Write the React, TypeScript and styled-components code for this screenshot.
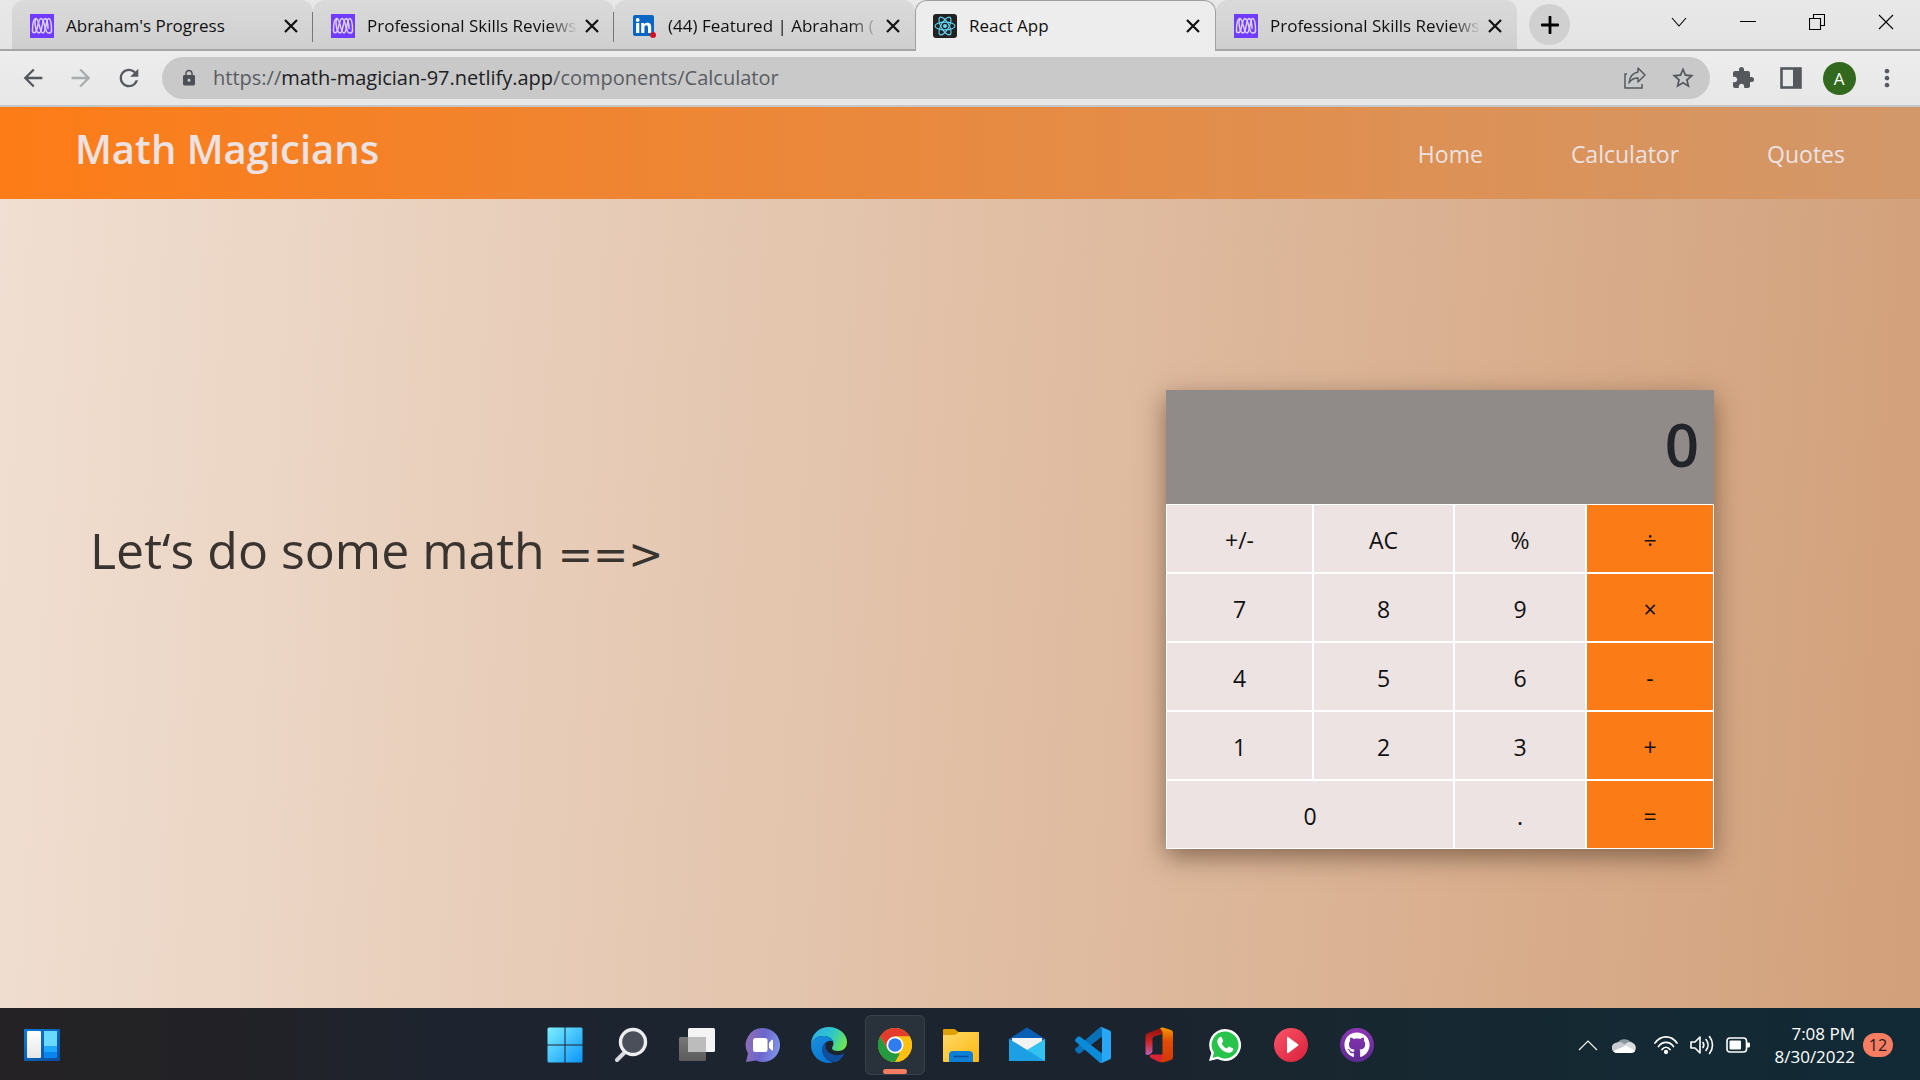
import React from "react";
import styled, { createGlobalStyle, css } from "styled-components";
import { FaGithub } from "react-icons/fa";
import {
  MdArrowBack,
  MdArrowForward,
  MdRefresh,
  MdLock,
  MdStarBorder,
  MdExtension,
  MdMoreVert,
} from "react-icons/md";

const uiFont = `"Open Sans", "Noto Sans", sans-serif`;

const GlobalStyle = createGlobalStyle`
  *, *::before, *::after { box-sizing: border-box; }
  body { margin: 0; font-family: ${uiFont}; }
  button, input { font: inherit; color: inherit; }
  svg { display: block; flex: none; }
`;

const Screen = styled.div`
  display: flex;
  flex-direction: column;
  min-height: 100vh;
`;

const bareButton = css`
  border: 0;
  padding: 0;
  background: none;
  display: flex;
  align-items: center;
  justify-content: center;
`;

/* ---------- browser window ---------- */

const TabStrip = styled.div`
  display: flex;
  height: 51px;
  padding-left: 12px;
  background: linear-gradient(#e8e8e8, #e4e4e4);
  border-bottom: 2px solid #a6a6a6;
`;

const Tab = styled.div<{ $active?: boolean; $divider?: boolean }>`
  position: relative;
  flex: 0 1 301px;
  min-width: 0;
  display: flex;
  align-items: center;
  height: 49px;
  padding: 2px 10px 0 18px;
  color: #111;
  border-radius: 12px 12px 0 0;
  background: linear-gradient(#dadada, #cfcfcf);
  ${(p) =>
    p.$divider &&
    css`
      &::after {
        content: "";
        position: absolute;
        right: 0;
        top: 12px;
        width: 1px;
        height: 30px;
        background: #777;
      }
    `}
  ${(p) =>
    p.$active &&
    css`
      height: 51px;
      padding: 0 10px 0 17px;
      border: 1px solid #a0a0a0;
      border-bottom: 0;
      background: #ededed;
    `}
`;

const TabTitle = styled.span<{ $fade?: boolean }>`
  flex: 1;
  min-width: 0;
  margin: 0 2px 0 12px;
  overflow: hidden;
  white-space: nowrap;
  font-size: 17px;
  line-height: 24px;
  ${(p) => p.$fade && css`mask-image: linear-gradient(90deg, #000 86%, transparent);`}
`;

const TabClose = styled.button`
  ${bareButton}
  width: 24px;
  height: 24px;
`;

const NewTab = styled.button`
  ${bareButton}
  width: 41px;
  height: 41px;
  margin: 4px 0 0 12px;
  border-radius: 50%;
  background: #d0d0d0;
`;

const WindowControls = styled.div`
  display: flex;
  margin-left: auto;
`;

const WindowButton = styled.button`
  ${bareButton}
  width: 69px;
  height: 43px;
`;

const Toolbar = styled.div`
  display: flex;
  align-items: center;
  height: 56px;
  padding: 0 9px;
  background: linear-gradient(#ededed, #e7e7e7);
  border-bottom: 2px solid #c4c6c8;
`;

const ToolButton = styled.button<{ $dim?: boolean }>`
  ${bareButton}
  width: 48px;
  height: 42px;
  color: ${(p) => (p.$dim ? "#a9abad" : "#55595e")};
`;

const AddressBar = styled.div`
  flex: 1;
  display: flex;
  align-items: center;
  height: 42px;
  margin: 0 9px;
  padding: 0 3px 0 18px;
  border-radius: 21px;
  background: #c9c9c9;
  color: #4d5156;
`;

const Url = styled.a`
  flex: 1;
  margin-left: 15px;
  font-size: 20px;
  line-height: 28px;
  color: #5a5d61;
  text-decoration: none;
  b {
    font-weight: 400;
    color: #202124;
  }
`;

const Avatar = styled.span`
  display: grid;
  place-items: center;
  width: 33px;
  height: 33px;
  border-radius: 50%;
  background: #33691e;
  color: #fff;
  font-size: 17px;
`;

/* ---------- web page ---------- */

const Page = styled.div`
  flex: 1;
  display: flex;
  flex-direction: column;
  background: linear-gradient(94deg, #f0dfd2, #d2a07a);
`;

const SiteHeader = styled.header`
  display: flex;
  justify-content: space-between;
  align-items: center;
  height: 92px;
  padding: 0 75px;
  color: #ede2e2;
  background: linear-gradient(90deg, #fd7c17, #d2986a);
`;

const SiteTitle = styled.h1`
  margin: 0 0 8px;
  font-size: 40px;
  line-height: 56px;
  font-weight: 600;
`;

const SiteNav = styled.nav`
  display: flex;
  gap: 88px;
  padding-top: 2px;
  a {
    color: inherit;
    font-size: 23px;
    line-height: 36px;
    text-decoration: none;
  }
`;

const Content = styled.main`
  flex: 1;
  display: flex;
  align-items: center;
  justify-content: space-between;
  padding: 32px 206px 0 90px;
`;

const Lead = styled.h2`
  margin: 0 0 134px;
  color: #3a3431;
  font-size: 50px;
  line-height: 72px;
  font-weight: 400;
`;

const Arrow = styled.span`
  font-family: "DejaVu Sans", sans-serif;
  font-size: 42px;
  font-weight: 400;
`;

const Calculator = styled.section`
  width: 548px;
  box-shadow: 0 8px 24px rgba(60, 40, 25, 0.55);
`;

const Display = styled.output`
  display: flex;
  justify-content: flex-end;
  align-items: center;
  height: 114px;
  padding: 0 15px 6px 0;
  background: #908a89;
  color: #212529;
  font-size: 60px;
  line-height: 80px;
  font-weight: 600;
`;

const Keys = styled.div`
  display: grid;
  grid-template-columns: 147fr 141fr 132fr 128fr;
  grid-auto-rows: 69px;
`;

const Key = styled.button<{ $operator?: boolean; $wide?: boolean }>`
  grid-column: span ${(p) => (p.$wide ? 2 : 1)};
  padding: 2px 0 0;
  border: 1px solid #fff;
  background: ${(p) => (p.$operator ? "#fb7b17" : "#ede3e2")};
  color: #111;
  font-size: 23px;
  line-height: 32px;
`;

/* ---------- taskbar ---------- */

const Taskbar = styled.footer`
  display: grid;
  grid-template-columns: 1fr auto 1fr;
  align-items: center;
  height: 72px;
  padding-top: 2px;
  background: linear-gradient(90deg, #242224 0%, #222226 12%, #1d2430 24%, #1b242e 60%, #162831 75%, #112a36 100%);
  color: #fff;
`;

const Widgets = styled.button`
  ${bareButton}
  width: 36px;
  margin-left: 24px;
`;

const Apps = styled.div`
  display: flex;
  gap: 6px;
  padding-left: 2px;
`;

const AppButton = styled.button<{ $open?: boolean }>`
  ${bareButton}
  position: relative;
  width: 60px;
  height: 60px;
  border-radius: 6px;
  ${(p) =>
    p.$open &&
    css`
      background: #29323a;
      box-shadow: inset 0 0 0 1px #38414a;
      &::after {
        content: "";
        position: absolute;
        left: 18px;
        bottom: 1px;
        width: 24px;
        height: 5px;
        border-radius: 3px;
        background: #f67d62;
      }
    `}
`;

const Tray = styled.div`
  display: flex;
  align-items: center;
  justify-content: flex-end;
  padding-right: 27px;
`;

const TrayIcons = styled.div`
  display: flex;
  align-items: center;
  gap: 12px;
  margin-right: 18px;
  & + & {
    margin-right: 24px;
  }
`;

const Clock = styled.time`
  font-size: 17px;
  line-height: 23px;
  text-align: right;
`;

const Badge = styled.span`
  display: grid;
  place-items: center;
  width: 30px;
  height: 24px;
  margin-left: 8px;
  border-radius: 12px;
  background: #f67d62;
  color: #1c1c1c;
  font-size: 16px;
  line-height: 24px;
`;

/* ---------- drawings ---------- */

const MicroverseIcon = () => (
  <svg width="24" height="24" viewBox="0 0 24 24" fill="none">
    <rect width="24" height="24" fill="#6f3bff" />
    <g stroke="#e0d2ff" strokeWidth="1.500" strokeLinecap="round">
      <path d="M2.500 16.500C2.500 9 3.500 4.500 6 4.500c3 0 3.500 14.500 7 14.500 3 0 3-14.500 5.500-14.500 2 0 3 4.500 3 12" />
      <path d="M2.500 16.500c0 3 3 3 4 0C8 12 8.500 4.500 11 4.500c3 0 3.500 9 5.500 13 1.200 2.500 5 2 5-1" />
      <path d="M6 4.500C4 7 5.500 19 9 19c3.500 0 3-14.500 6-14.500 2 0 3 6 3 10" />
    </g>
  </svg>
);

const LinkedInIcon = () => (
  <svg width="24" height="24" viewBox="0 0 24 24">
    <rect x="1" y="1" width="21" height="21" rx="2" fill="#0a66c2" />
    <g fill="#fff">
      <circle cx="5.700" cy="6" r="1.900" />
      <path d="M4.100 9h3.200v10H4.100zM9.200 9h3v1.400c.6-1 1.700-1.700 3.200-1.700 3 0 3.800 1.900 3.800 4.600V19H16v-5.200c0-1.400-.3-2.500-1.700-2.500s-1.900 1-1.900 2.500V19H9.200z" />
    </g>
    <circle cx="21" cy="21" r="3" fill="#d11124" />
  </svg>
);

const ReactIcon = () => (
  <svg width="24" height="24" viewBox="0 0 24 24" fill="none">
    <rect width="24" height="24" rx="3" fill="#222" />
    <circle cx="12" cy="12" r="2" fill="#61dafb" />
    <g stroke="#61dafb" strokeWidth="1.100">
      <ellipse cx="12" cy="12" rx="10" ry="3.900" />
      <ellipse cx="12" cy="12" rx="10" ry="3.900" transform="rotate(60 12 12)" />
      <ellipse cx="12" cy="12" rx="10" ry="3.900" transform="rotate(120 12 12)" />
    </g>
  </svg>
);

const CrossIcon = () => (
  <svg width="14" height="14" viewBox="0 0 14 14" stroke="#111" strokeWidth="2.200">
    <path d="M1 1l12 12M13 1L1 13" />
  </svg>
);

const PlusIcon = () => (
  <svg width="18" height="18" viewBox="0 0 18 18" stroke="#000" strokeWidth="2.800" strokeLinecap="round">
    <path d="M9 1v16M1 9h16" />
  </svg>
);

const ShareIcon = () => (
  <svg width="24" height="24" viewBox="0 0 24 24" fill="none" stroke="currentColor" strokeWidth="1.500">
    <path d="M4 8H2v14h17v-4" />
    <path d="M15 2l7 7-7 7v-4c-4 0-7 1.500-9 5 .5-6 4-10 9-11z" strokeLinejoin="round" />
  </svg>
);

const SidePanelIcon = () => (
  <svg width="22" height="22" viewBox="0 0 22 22" fill="none">
    <rect x="1.500" y="1.500" width="19" height="19" stroke="currentColor" strokeWidth="2.600" />
    <path d="M13 1h8v20h-8z" fill="currentColor" />
  </svg>
);

const WidgetsIcon = () => (
  <svg width="36" height="32" viewBox="0 0 36 32">
    <defs>
      <linearGradient id="widget-frame" x1="0" y1="0" x2="1" y2="1">
        <stop stopColor="#0a7bd8" />
        <stop offset="1" stopColor="#0d4a9a" />
      </linearGradient>
      <linearGradient id="widget-pane" x1="0" y1="0" x2="0" y2="1">
        <stop stopColor="#fff" />
        <stop offset="1" stopColor="#e6e6e6" />
      </linearGradient>
    </defs>
    <rect width="36" height="32" rx="1" fill="url(#widget-frame)" />
    <rect x="3" y="2" width="14" height="27" rx="1" fill="url(#widget-pane)" />
    <path d="M20 2h13v15H20z" fill="#69d8ff" />
    <path d="M20 17h13v6H20z" fill="#1ea7ff" />
    <path d="M20 23h13v6H20z" fill="#0a84ee" />
  </svg>
);

const StartIcon = () => (
  <svg width="36" height="36" viewBox="0 0 36 36">
    <defs>
      <linearGradient id="start" x1="0" y1="0" x2="36" y2="36" gradientUnits="userSpaceOnUse">
        <stop stopColor="#7df1ff" />
        <stop offset="1" stopColor="#0a93fb" />
      </linearGradient>
    </defs>
    <path fill="url(#start)" d="M2 .5h15.500v17H.5V2A1.500 1.500 0 0 1 2 .5zM18.500.5H34A1.500 1.500 0 0 1 35.500 2v15.500h-17zM.5 18.500h17v17H2A1.500 1.500 0 0 1 .5 34zM18.500 18.500h17V34a1.500 1.500 0 0 1-1.500 1.500H18.500z" />
  </svg>
);

const SearchIcon = () => (
  <svg width="36" height="36" viewBox="0 0 36 36">
    <path d="M4 33l8-8" stroke="#d6dadc" strokeWidth="4" strokeLinecap="round" />
    <circle cx="20" cy="15" r="12.500" fill="#4a4f59" stroke="#eceeef" strokeWidth="3.400" />
  </svg>
);

const TaskViewIcon = () => (
  <svg width="36" height="36" viewBox="0 0 36 36">
    <defs>
      <linearGradient id="view-back" x1="0" y1="0" x2="0" y2="1">
        <stop stopColor="#777" />
        <stop offset="1" stopColor="#5c5c5c" />
      </linearGradient>
    </defs>
    <rect x="0" y="10" width="27" height="24" rx="1.500" fill="url(#view-back)" />
    <rect x="9" y="1" width="27" height="24" rx="1.500" fill="#f4f4f4" />
    <path d="M9 10h18v15H10.500A1.500 1.500 0 0 1 9 23.500z" fill="#bcbcbc" />
  </svg>
);

const ChatIcon = () => (
  <svg width="36" height="36" viewBox="0 0 36 36">
    <defs>
      <linearGradient id="chat" x1="0" y1=".3" x2="1" y2=".5">
        <stop stopColor="#8f6fb4" />
        <stop offset=".5" stopColor="#6b66cc" />
        <stop offset="1" stopColor="#7f93ea" />
      </linearGradient>
    </defs>
    <path d="M18 1a17 17 0 1 1-7 32.500L1 35l2-8.500A17 17 0 0 1 18 1z" fill="url(#chat)" />
    <rect x="8" y="11" width="14.500" height="14" rx="2.500" fill="#fff" />
    <path d="M24 16l2.500-3c.8-.6 1.500-.2 1.500.6v9c0 .8-.7 1.200-1.500.6L24 20.500z" fill="#fff" />
  </svg>
);

const EdgeIcon = () => (
  <svg width="36" height="36" viewBox="0 0 36 36">
    <defs>
      <linearGradient id="edge-top" x1="0" y1=".3" x2="1" y2=".6">
        <stop stopColor="#2fb0e8" />
        <stop offset=".55" stopColor="#2fc7c6" />
        <stop offset="1" stopColor="#6fe64d" />
      </linearGradient>
      <linearGradient id="edge-left" x1="0" y1="0" x2=".6" y2="1">
        <stop stopColor="#1a8fdd" />
        <stop offset="1" stopColor="#0878d4" />
      </linearGradient>
    </defs>
    <path d="M0 18C0 7 8 0 18 0s18 7 18 15c0 6-4 9-9 9-4 0-6-1-6-3 0-1 1.500-2 1.500-4.500C22.500 12 18 9 12 9 6 9 1.500 12 0 18z" fill="url(#edge-top)" />
    <path d="M0 18C1.500 12 6 9 12 9c5 0 9 2 10.300 5.500C20 12.800 15 14 12.500 18 9 25 14 33 22 35.500c-1.200.3-2.600.5-4 .5C8 36 0 28 0 18z" fill="url(#edge-left)" />
    <path d="M14.500 15.500C10 19.500 10 27 15 31.500c5 4.300 11 4.500 13.500 1.500 2-1.500 3.500-3.500 4.500-5.500.3-.7-.3-1-.8-.7-2 1-4 1.400-6.200 1.400-6.500 0-11.500-4.500-11.500-9.500 0-1.200.2-2.300 0-3.200z" fill="#104f9e" />
  </svg>
);

const ChromeIcon = () => (
  <svg width="34" height="34" viewBox="0 0 48 48">
    <circle cx="24" cy="24" r="24" fill="#fbbc09" />
    <path d="M3.200 12A24 24 0 0 1 44.800 12H24L13.600 30z" fill="#e33b2e" />
    <path d="M3.200 12L13.600 30 24 36h10.400L24 48A24 24 0 0 1 3.200 12z" fill="#249a41" />
    <path d="M34.400 30L24 48a24 24 0 0 0 20.800-36H24z" fill="#fcc012" />
    <circle cx="24" cy="24" r="12" fill="#fff" />
    <circle cx="24" cy="24" r="9.600" fill="#2e7cf0" />
  </svg>
);

const FolderIcon = () => (
  <svg width="36" height="36" viewBox="0 0 36 36">
    <defs>
      <linearGradient id="folder" x1="0" y1="0" x2="1" y2="1">
        <stop stopColor="#ffd968" />
        <stop offset="1" stopColor="#fdb80f" />
      </linearGradient>
    </defs>
    <path d="M0 3a1 1 0 0 1 1-1h10c2 0 3 3 5 3h19a1 1 0 0 1 1 1v10H0z" fill="#e0a106" />
    <path d="M0 8h12l4-3h19a1 1 0 0 1 1 1v28a1 1 0 0 1-1 1H1a1 1 0 0 1-1-1z" fill="url(#folder)" />
    <path d="M6 35v-7a4 4 0 0 1 4-4h16a4 4 0 0 1 4 4v7z" fill="#0d7fd6" />
    <path d="M11 29.500h14" stroke="#09519c" strokeWidth="1.500" strokeLinecap="round" />
  </svg>
);

const MailIcon = () => (
  <svg width="36" height="36" viewBox="0 0 36 36">
    <path d="M0 12L17 1c.7-.4 1.300-.4 2 0l17 11v6H0z" fill="#0a5fb4" />
    <path d="M3 11h30v14H3z" fill="#f2f2f2" />
    <path d="M0 12l18 11L36 12v22H0z" fill="#33c1f2" />
    <path d="M0 12l36 22H1a1 1 0 0 1-1-1z" fill="#1e9fe4" />
  </svg>
);

const CodeIcon = () => (
  <svg width="36" height="36" viewBox="0 0 36 36">
    <path d="M27 0v9.500L5.200 26.200c-.8.600-1.700.5-2.400 0L.7 24.300c-.9-.8-.9-2.200 0-3L24.700.6z" fill="#0a70b8" />
    <path d="M27 36v-9.500L5.200 9.800c-.8-.6-1.700-.5-2.400 0L.7 11.700c-.9.800-.9 2.200 0 3l24 20.700z" fill="#0b8bd8" />
    <path d="M26.500 0l8.200 3.500c.8.400 1.300 1.200 1.300 2v25c0 .9-.5 1.600-1.300 2L26.500 36c-1 .2-2 0-2.700-.6 1 .8 3.200.3 3.200-1.400V2c0-1.700-2.200-2.200-3.200-1.400.7-.6 1.700-.8 2.700-.6z" fill="#28a8f4" />
  </svg>
);

const OfficeIcon = () => (
  <svg width="36" height="36" viewBox="0 0 36 36">
    <defs>
      <linearGradient id="office-side" x1="0" y1="0" x2="0" y2="1">
        <stop stopColor="#f59a00" />
        <stop offset=".4" stopColor="#e04a06" />
        <stop offset="1" stopColor="#d43706" />
      </linearGradient>
      <linearGradient id="office-left" x1="0" y1="0" x2="0" y2="1">
        <stop stopColor="#8c1208" />
        <stop offset=".5" stopColor="#cf2424" />
        <stop offset="1" stopColor="#b860b5" />
      </linearGradient>
    </defs>
    <path d="M20 1L7 6C5.500 6.600 4.500 8 4.500 9.500V26c0 2 2 2.600 3.500 1.700l1.700-1c1-.6 1.800-1.700 1.800-3V12c0-1.200.8-2.400 2-2.800L21.500 7z" fill="url(#office-left)" />
    <path d="M11 27.500h11V35h-2.500c-1 0-2-.3-3-.8L10 31c-2-1.200-1.500-3.500 1-3.500z" fill="#d92336" />
    <path d="M19 1l3-.4L30 3c1.300.5 2 1.500 2 3v24c0 1.300-.8 2.500-2 3l-8 2.500-3-.5 2.500-3.500V5z" fill="url(#office-side)" />
  </svg>
);

const WhatsAppIcon = () => (
  <svg width="36" height="36" viewBox="0 0 36 36">
    <path d="M18 2a16 16 0 1 1-7.500 30.100L2 34l2.300-8A16 16 0 0 1 18 2z" fill="#fff" />
    <path d="M18 4.500a13.500 13.500 0 1 1-7 25L5.600 30.700 7 25.600A13.500 13.500 0 0 1 18 4.500z" fill="#28c34b" />
    <path d="M12.700 10.200c.6-.6 1.700-.5 2 .2l1.400 3.200c.2.500.1 1-.3 1.400l-1.200 1.400c1.100 2.300 2.800 4 5.200 5.100l1.400-1.500c.4-.4.9-.5 1.400-.3l3 1.500c.7.400.8 1 .5 1.800-.7 2-2.600 3-4.700 2.700-5.500-.9-10-5.300-11-10.500-.3-2 .6-3.800 2.300-5z" fill="#fff" />
  </svg>
);

const PlayIcon = () => (
  <svg width="34" height="34" viewBox="0 0 34 34">
    <defs>
      <linearGradient id="play" x1="0" y1="0" x2="1" y2="1">
        <stop stopColor="#fb5468" />
        <stop offset="1" stopColor="#d9203c" />
      </linearGradient>
    </defs>
    <circle cx="17" cy="17" r="17" fill="url(#play)" />
    <path d="M13 9.500c0-.8.600-1 1.200-.6L24 16.200c.6.500.6 1.100 0 1.600l-9.800 7.300c-.6.4-1.200.2-1.200-.6z" fill="#fff" />
  </svg>
);

const GitHubDisc = styled.span`
  display: grid;
  place-items: center;
  width: 34px;
  height: 34px;
  border-radius: 50%;
  background: linear-gradient(#8f35b5, #5c2b91);
  color: #fff;
`;

const CloudIcon = () => (
  <svg width="24" height="16" viewBox="0 0 24 16">
    <path d="M5 7a8 7 0 0 1 14-2l-7 5z" fill="#8b979d" />
    <path d="M5 5.500c3-1 5 0 7 1.500l6 4-8 5H5A5 5 0 0 1 5 5.500z" fill="#c5cbce" />
    <path d="M12 8.500C15 5 18 4.500 20 5.500c4 1.500 5 6 2.500 9L13 15z" fill="#d9dddf" />
    <path d="M1.500 14L14 8.500l9 5.500c-.8 1.300-1.700 2-3.500 2H5c-1.500 0-2.700-.7-3.500-2z" fill="#fff" />
  </svg>
);

const WifiIcon = () => (
  <svg width="24" height="20" viewBox="0 0 24 20" fill="none" stroke="#fff" strokeWidth="1.700" strokeLinecap="round">
    <path d="M1 8C7-.2 17-.2 23 8M4.500 11.500c4-5.500 11-5.500 15 0M8 14.500c2.200-3 5.800-3 8 0" />
    <circle cx="12" cy="17" r="1.300" fill="#fff" />
  </svg>
);

const VolumeIcon = () => (
  <svg width="24" height="20" viewBox="0 0 24 20" fill="none" stroke="#fff" strokeWidth="1.600" strokeLinecap="round" strokeLinejoin="round">
    <path d="M1 7h4l5-5v16l-5-5H1z" />
    <path d="M13 7.500c1 1.500 1 3.500 0 5M16 4.500c2.700 3.300 2.700 7.700 0 11M19.500 1.500c4 5 4 12 0 17" />
  </svg>
);

const BatteryIcon = () => (
  <svg width="24" height="16" viewBox="0 0 24 16" fill="none">
    <rect x="1" y="1" width="19.500" height="14" rx="3" stroke="#fff" strokeWidth="1.600" />
    <rect x="3.500" y="3.500" width="11.500" height="9" rx="1" fill="#fff" />
    <path d="M21 5.500h1.500c1 0 1.500.6 1.500 1.500v2c0 .9-.5 1.500-1.500 1.500H21z" fill="#fff" />
  </svg>
);

const thinLine = { fill: "none", stroke: "currentColor", strokeWidth: 1.1 };

/* ---------- data ---------- */

const tabs = [
  { title: "Abraham's Progress", icon: <MicroverseIcon />, divider: true },
  { title: "Professional Skills Reviews", icon: <MicroverseIcon />, divider: true, fade: true },
  { title: "(44) Featured | Abraham (", icon: <LinkedInIcon />, fade: true },
  { title: "React App", icon: <ReactIcon />, active: true },
  { title: "Professional Skills Reviews", icon: <MicroverseIcon />, fade: true },
];

const keys = [
  "+/-", "AC", "%", "÷",
  "7", "8", "9", "×",
  "4", "5", "6", "-",
  "1", "2", "3", "+",
  "0", ".", "=",
];
const operators = ["÷", "×", "-", "+", "="];

const apps = [
  { name: "Start", icon: <StartIcon /> },
  { name: "Search", icon: <SearchIcon /> },
  { name: "Task View", icon: <TaskViewIcon /> },
  { name: "Chat", icon: <ChatIcon /> },
  { name: "Edge", icon: <EdgeIcon /> },
  { name: "Chrome", icon: <ChromeIcon />, open: true },
  { name: "File Explorer", icon: <FolderIcon /> },
  { name: "Mail", icon: <MailIcon /> },
  { name: "Visual Studio Code", icon: <CodeIcon /> },
  { name: "Office", icon: <OfficeIcon /> },
  { name: "WhatsApp", icon: <WhatsAppIcon /> },
  { name: "Player", icon: <PlayIcon /> },
  { name: "GitHub", icon: <GitHubDisc><FaGithub size={26} /></GitHubDisc> },
];

export default function App() {
  return (
    <Screen>
      <GlobalStyle />
      <TabStrip>
        {tabs.map((tab, i) => (
          <Tab key={i} $active={tab.active} $divider={tab.divider}>
            {tab.icon}
            <TabTitle $fade={tab.fade}>{tab.title}</TabTitle>
            <TabClose aria-label="Close tab"><CrossIcon /></TabClose>
          </Tab>
        ))}
        <NewTab aria-label="New tab"><PlusIcon /></NewTab>
        <WindowControls>
          <WindowButton aria-label="Search tabs">
            <svg width="16" height="10" viewBox="0 0 16 10" {...thinLine}><path d="M1 1l7 8 7-8" /></svg>
          </WindowButton>
          <WindowButton aria-label="Minimize">
            <svg width="16" height="2" viewBox="0 0 16 2"><path d="M0 0h16v1H0z" /></svg>
          </WindowButton>
          <WindowButton aria-label="Restore">
            <svg width="16" height="16" viewBox="0 0 16 16" {...thinLine}>
              <path d="M.5 4.500h11v11H.5zM4.500 4.500v-4h11v11h-4" />
            </svg>
          </WindowButton>
          <WindowButton aria-label="Close">
            <svg width="16" height="16" viewBox="0 0 16 16" {...thinLine}><path d="M1 1l14 14M15 1L1 15" /></svg>
          </WindowButton>
        </WindowControls>
      </TabStrip>
      <Toolbar>
        <ToolButton aria-label="Back"><MdArrowBack size={28} /></ToolButton>
        <ToolButton $dim aria-label="Forward"><MdArrowForward size={28} /></ToolButton>
        <ToolButton aria-label="Reload"><MdRefresh size={28} /></ToolButton>
        <AddressBar>
          <MdLock size={18} />
          <Url href="#">https://<b>math-magician-97.netlify.app</b>/components/Calculator</Url>
          <ToolButton aria-label="Share"><ShareIcon /></ToolButton>
          <ToolButton aria-label="Bookmark"><MdStarBorder size={26} /></ToolButton>
        </AddressBar>
        <ToolButton aria-label="Extensions"><MdExtension size={24} /></ToolButton>
        <ToolButton aria-label="Side panel"><SidePanelIcon /></ToolButton>
        <ToolButton aria-label="Profile"><Avatar>A</Avatar></ToolButton>
        <ToolButton aria-label="Menu"><MdMoreVert size={28} /></ToolButton>
      </Toolbar>
      <Page>
        <SiteHeader>
          <SiteTitle>Math Magicians</SiteTitle>
          <SiteNav>
            <a href="#home">Home</a>
            <a href="#calculator">Calculator</a>
            <a href="#quotes">Quotes</a>
          </SiteNav>
        </SiteHeader>
        <Content>
          <Lead>Let‘s do some math <Arrow>==&gt;</Arrow></Lead>
          <Calculator>
            <Display>0</Display>
            <Keys>
              {keys.map((k) => (
                <Key key={k} $wide={k === "0"} $operator={operators.includes(k)}>{k}</Key>
              ))}
            </Keys>
          </Calculator>
        </Content>
      </Page>
      <Taskbar>
        <Widgets aria-label="Widgets"><WidgetsIcon /></Widgets>
        <Apps>
          {apps.map((app) => (
            <AppButton key={app.name} $open={app.open} aria-label={app.name}>{app.icon}</AppButton>
          ))}
        </Apps>
        <Tray>
          <TrayIcons>
            <svg width="24" height="12" viewBox="0 0 24 12" {...thinLine}><path d="M3 11l9-9 9 9" /></svg>
            <CloudIcon />
          </TrayIcons>
          <TrayIcons>
            <WifiIcon />
            <VolumeIcon />
            <BatteryIcon />
          </TrayIcons>
          <Clock>7:08 PM<br />8/30/2022</Clock>
          <Badge>12</Badge>
        </Tray>
      </Taskbar>
    </Screen>
  );
}
